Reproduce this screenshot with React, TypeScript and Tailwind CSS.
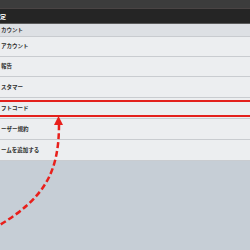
export default function App() {
  const rows = [
    { label: "アカウント", h: "h-[20px]" },
    { label: "報告", h: "h-[20px]" },
    { label: "スタマー", h: "h-[21px]" },
    { label: "フトコード", h: "h-[21px]" },
    { label: "ーザー規約", h: "h-[21px]" },
    { label: "ームを追加する", h: "h-[21px]" },
  ];

  return (
    <div
      className="relative w-[250px] h-[250px] overflow-hidden bg-[#c6ced6]"
      style={{ fontFamily: '"Noto Sans CJK JP", "Noto Sans", sans-serif' }}
    >
      {/* status / top bar */}
      <div className="h-[9px] bg-[#3c3c3c] border-b border-[#4a4444]" />
      {/* title bar */}
      <div className="h-[15px] bg-[#252525] border-b border-[#5a5a5a] flex items-center pt-[1px]">
        <span className="ml-[0px] text-[6px] leading-none font-bold text-white">
          定
        </span>
      </div>

      {/* section header */}
      <div className="h-[13px] bg-[#dde0e4] border-b border-[#c8cbcf] flex items-center pt-[2px]">
        <span className="ml-[1px] text-[5.5px] leading-none font-bold text-[#333]">
          カウント
        </span>
      </div>

      {/* rows */}
      <div className="bg-[#eceef0]">
        {rows.map((r) => (
          <div
            key={r.label}
            className={`${r.h} flex items-center border-b border-[#c9ccd0] pt-[1px]`}
          >
            <span className="ml-[1px] text-[5.5px] leading-none font-bold text-[#2e2e2e] whitespace-nowrap">
              {r.label}
            </span>
          </div>
        ))}
      </div>

      {/* red highlight box */}
      <div className="absolute left-[-10px] right-[-10px] top-[100px] h-[17px] border-y-2 border-[#e3201c]" />

      {/* dashed arrow */}
      <svg
        className="absolute inset-0"
        width="250"
        height="250"
        viewBox="0 0 250 250"
      >
        <path
          d="M59 124 C59 172 45 198 -2 226"
          fill="none"
          stroke="#e8201c"
          strokeWidth="2.5"
          strokeDasharray="6 3"
        />
        <polygon points="58.5,116 54,125 63,125" fill="#e8201c" />
      </svg>
    </div>
  );
}
